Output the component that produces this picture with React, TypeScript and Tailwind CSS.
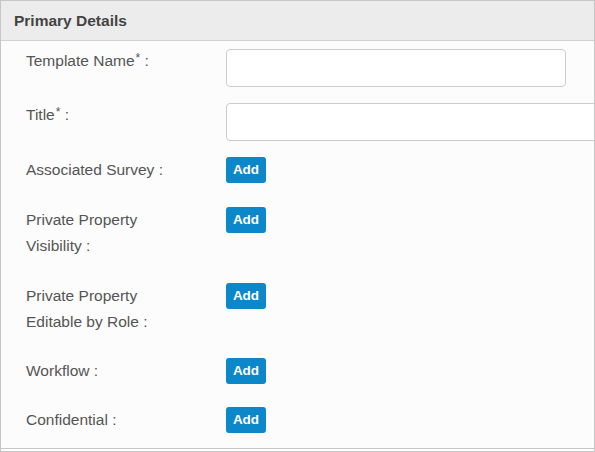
import React from 'react';

const Req: React.FC = () => <sup className="text-[12px] relative -top-[4px] ml-[1px]">*</sup>;

const AddButton: React.FC = () => (
  <button
    type="button"
    className="h-[26px] w-[40px] rounded-[3px] bg-[#0b87ca] text-white text-[13.5px] font-bold leading-[26px] text-center"
  >
    Add
  </button>
);

const Row: React.FC<{ label: React.ReactNode; children: React.ReactNode; className?: string }> = ({
  label,
  children,
  className = '',
}) => (
  <div className={`flex items-start ${className}`}>
    <div className="w-[200px] shrink-0">
      <div className="w-[150px] leading-[26px]">{label}</div>
    </div>
    <div className="shrink-0">{children}</div>
  </div>
);

const App: React.FC = () => {
  return (
    <div className="w-[595px] h-[452px] bg-white overflow-hidden font-['Liberation_Sans',Arial,sans-serif]">
      <div className="h-[452px] border-x border-t border-[#c6c6c6] overflow-hidden">
        <div className="h-[40px] bg-[#ececec] border-b border-[#d2d2d2] px-[13px] flex items-center text-[15.5px] font-bold text-[#444]">
          Primary Details
        </div>

        <div className="bg-[#fcfcfc] border-b border-[#c6c6c6] pt-[8px] pb-[15px] pl-[25px] text-[15.5px] text-[#555]">
          <Row
            className="mb-[16px]"
            label={
              <span className="relative -top-[1px]">
                Template Name<Req /> :
              </span>
            }
          >
            <input className="h-[38px] w-[340px] rounded-[4px] border border-[#cccccc] bg-white block" />
          </Row>

          <Row
            className="mb-[16px]"
            label={
              <span className="relative -top-[1px]">
                Title<Req /> :
              </span>
            }
          >
            <input className="h-[38px] w-[400px] rounded-[4px] border border-[#cccccc] bg-white block" />
          </Row>

          <Row className="mb-[24px]" label="Associated Survey :">
            <AddButton />
          </Row>

          <Row className="mb-[24px]" label="Private Property Visibility :">
            <AddButton />
          </Row>

          <Row className="mb-[23px]" label="Private Property Editable by Role :">
            <AddButton />
          </Row>

          <Row className="mb-[23px]" label="Workflow :">
            <AddButton />
          </Row>

          <Row label="Confidential :">
            <AddButton />
          </Row>
        </div>

        <div className="mt-[2px] border-t border-[#c6c6c6]" />
      </div>
    </div>
  );
};

export default App;
